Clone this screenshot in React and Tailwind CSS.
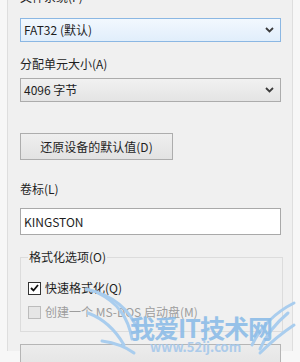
import React from 'react';

const font = { fontFamily: '"Noto Sans CJK SC", "Noto Sans", sans-serif' };

function Chevron({ color = '#3c3c3c' }) {
  return (
    <svg width="9" height="6" viewBox="0 0 9 6" className="mr-[6px]">
      <path d="M1 1 L4.5 4.5 L8 1" fill="none" stroke={color} strokeWidth="1.8" />
    </svg>
  );
}

function Select({ value, active }) {
  return (
    <div
      className={
        'flex h-[24px] w-[261px] items-center justify-between border pl-[3px] text-[12px] ' +
        (active
          ? 'border-[#8bb7e3] bg-gradient-to-b from-[#f2f8fe] to-[#e1eefb]'
          : 'border-[#acacac] bg-gradient-to-b from-[#f1f1f1] to-[#e4e4e4]')
      }
    >
      <span>{value}</span>
      <Chevron />
    </div>
  );
}

function Watermark() {
  return (
    <div className="pointer-events-none absolute left-[82px] top-[283px] h-[80px] w-[218px]">
      <svg width="218" height="80" viewBox="0 0 218 80" className="absolute left-0 top-0">
        <g fill="none" stroke="#a9cdee" strokeWidth="3" strokeLinecap="round">
          <path d="M4 6 C30 12 48 26 56 48" />
          <path d="M16 10 C36 20 46 34 50 56" />
          <path d="M6 30 C22 36 34 48 42 62" />
          <path d="M20 58 C34 60 44 64 52 70" />
          <path d="M212 20 C196 28 180 42 170 62" />
          <path d="M206 30 C194 40 184 52 178 66" />
          <path d="M212 42 C200 50 188 60 178 70" />
        </g>
      </svg>
      <div className="absolute left-[48px] top-[30px] whitespace-nowrap text-[25px] font-bold leading-[28px] tracking-[-1px] text-[#8dbde8] opacity-90">
        我爱IT技术网
      </div>
      <div className="absolute left-[68px] top-[57px] whitespace-nowrap text-[13px] font-bold leading-[14px] text-[#a6c8ea] opacity-90">
        www.52ij.com
      </div>
    </div>
  );
}

export default function App() {
  return (
    <div className="relative h-[362px] w-[300px] overflow-hidden bg-[#f7f7f7] text-[#1e1e1e]" style={font}>
      <div className="ml-[7px] h-[362px] w-[286px] border-x border-[#dedede] bg-[#f0f0f0] pl-[12px]">
        <div className="-mt-[11px] text-[12px] leading-[16px]">文件系统(F)</div>
        <div className="mt-[13px]">
          <Select value="FAT32 (默认)" active />
        </div>

        <div className="mt-[14px] text-[12px] leading-[16px]">分配单元大小(A)</div>
        <div className="mt-[6px]">
          <Select value="4096 字节" />
        </div>

        <button className="mt-[31px] flex h-[27px] w-[153px] items-center justify-center border border-[#adadad] bg-gradient-to-b from-[#efefef] to-[#e2e2e2] text-[12px]">
          还原设备的默认值(D)
        </button>

        <div className="mt-[21px] text-[12px] leading-[16px]">卷标(L)</div>
        <div className="mt-[11px] flex h-[27px] w-[261px] items-center border border-[#a9a9a9] bg-white pl-[3px] text-[12px]">
          KINGSTON
        </div>

        <fieldset className="mt-[14px] w-[263px] border border-[#dcdcdc] pb-[11px] pl-[7px]">
          <legend className="px-[1px] text-[12px] leading-[16px]">格式化选项(O)</legend>
          <div className="mt-[15px] flex items-center gap-[4px] text-[12px] leading-[16px]">
            <span className="flex h-[13px] w-[13px] items-center justify-center border border-[#333] bg-white">
              <svg width="9" height="8" viewBox="0 0 9 8">
                <path d="M1 4 L3.5 6.5 L8 1" fill="none" stroke="#111" strokeWidth="1.8" />
              </svg>
            </span>
            <span>快速格式化(Q)</span>
          </div>
          <div className="mt-[8px] flex items-center gap-[4px] text-[12px] leading-[16px] text-[#9d9d9d]">
            <span className="h-[13px] w-[13px] border border-[#bcbcbc] bg-[#e6e6e6]" />
            <span>创建一个 MS-DOS 启动盘(M)</span>
          </div>
        </fieldset>

        <div className="mt-[12px] h-[30px] w-[261px] border border-[#b5b5b5] bg-gradient-to-b from-[#ececec] to-[#e2e2e2]" />
      </div>
      <Watermark />
    </div>
  );
}
